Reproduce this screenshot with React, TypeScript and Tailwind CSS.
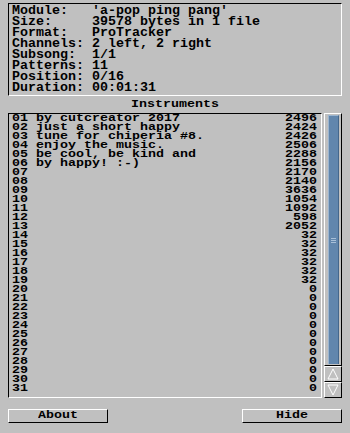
import React from "react";

const rows: [string, string][] = [
  ["by cutcreator 2017", "2496"],
  ["just a short happy", "2424"],
  ["tune for chiperia #8.", "2426"],
  ["enjoy the music.", "2506"],
  ["be cool, be kind and", "2288"],
  ["by happy! :-)", "2156"],
  ["", "2170"],
  ["", "2140"],
  ["", "3636"],
  ["", "1054"],
  ["", "1092"],
  ["", "598"],
  ["", "2052"],
  ["", "32"],
  ["", "32"],
  ["", "32"],
  ["", "32"],
  ["", "32"],
  ["", "32"],
  ["", "0"],
  ["", "0"],
  ["", "0"],
  ["", "0"],
  ["", "0"],
  ["", "0"],
  ["", "0"],
  ["", "0"],
  ["", "0"],
  ["", "0"],
  ["", "0"],
  ["", "0"],
];

const info = [
  "Module:   'a-pop ping pang'",
  "Size:     39578 bytes in 1 file",
  "Format:   ProTracker",
  "Channels: 2 left, 2 right",
  "Subsong:  1/1",
  "Patterns: 11",
  "Position: 0/16",
  "Duration: 00:01:31",
];

const raised =
  "border-t border-l border-t-white border-l-white border-r border-b border-r-black border-b-black";
const sunken =
  "border-t border-l border-t-black border-l-black border-b border-r border-b-white border-r-white";

function Squat({ children }: { children: React.ReactNode }) {
  return (
    <span className="inline-block origin-center scale-y-[0.75] font-bold text-[13.33px] leading-[12px]">
      {children}
    </span>
  );
}

export default function App() {
  return (
    <div
      className="w-[350px] h-[433px] bg-[#c0c0c0] text-black flex flex-col px-[8px] pt-[3px] overflow-hidden"
      style={{ fontFamily: '"Liberation Mono", "DejaVu Sans Mono", monospace' }}
    >
      {/* Info box */}
      <div className={`h-[93px] ${sunken} pl-[3px] pt-[1px] font-bold text-[13.33px] leading-[11px]`}>
        {info.map((l, i) => (
          <div key={i} className="whitespace-pre h-[11px]">
            {l}
          </div>
        ))}
      </div>

      {/* Header */}
      <div className="h-[17px] flex items-center justify-center">
        <Squat>Instruments</Squat>
      </div>

      {/* List + scrollbar */}
      <div className="h-[285px] flex gap-[2px]">
        <div className={`w-[314px] h-full ${sunken} overflow-hidden pl-[3px] pr-[4px]`}>
          <div className="origin-top scale-y-[0.75] font-bold text-[13.33px] leading-[12px]">
            {rows.map(([name, val], i) => (
              <div key={i} className="h-[12px] flex justify-between whitespace-pre">
                <span>
                  {String(i + 1).padStart(2, "0")} {name}
                </span>
                <span>{val}</span>
              </div>
            ))}
          </div>
        </div>
        <div className="w-[18px] h-full flex flex-col">
          <div className={`flex-1 ${raised} pt-[1px] px-[2px] pb-[1px] flex`}>
            <div className="flex-1 bg-[#6186ad] border-t border-l border-t-[#9cb5cf] border-l-[#9cb5cf] border-r border-r-[#44678c] flex items-center justify-center ml-[1px]">
              <div className="flex flex-col gap-[1px]">
                <div className="w-[5px] h-[1px] bg-[#a9c0d8]" />
                <div className="w-[5px] h-[1px] bg-[#a9c0d8]" />
                <div className="w-[5px] h-[1px] bg-[#a9c0d8]" />
              </div>
            </div>
          </div>
          <div className={`h-[16px] ${raised} flex items-center justify-center`}>
            <svg width="12" height="12" viewBox="0 0 12 12">
              <polygon points="6,1 11,11 1,11" fill="none" stroke="#ffffff" strokeWidth="1" />
            </svg>
          </div>
          <div className={`h-[16px] ${raised} flex items-center justify-center`}>
            <svg width="12" height="12" viewBox="0 0 12 12">
              <polygon points="1,1 11,1 6,11" fill="none" stroke="#ffffff" strokeWidth="1" />
            </svg>
          </div>
        </div>
      </div>

      {/* Buttons */}
      <div className="mt-[11px] flex justify-between">
        <button className={`w-[100px] h-[14px] ${raised} flex items-center justify-center overflow-hidden`}>
          <Squat>About</Squat>
        </button>
        <button className={`w-[100px] h-[14px] ${raised} flex items-center justify-center overflow-hidden`}>
          <Squat>Hide</Squat>
        </button>
      </div>
    </div>
  );
}
